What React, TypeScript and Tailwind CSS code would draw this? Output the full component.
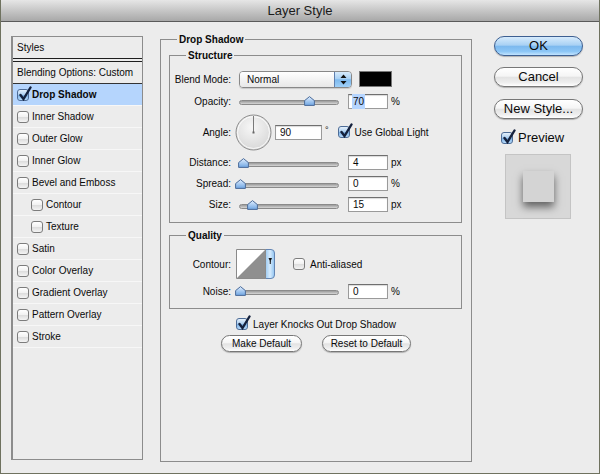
import React from "react";

const styleItems = [
  { label: "Inner Shadow" },
  { label: "Outer Glow" },
  { label: "Inner Glow" },
  { label: "Bevel and Emboss" },
  { label: "Contour", indent: true },
  { label: "Texture", indent: true },
  { label: "Satin" },
  { label: "Color Overlay" },
  { label: "Gradient Overlay" },
  { label: "Pattern Overlay" },
  { label: "Stroke" },
];

function Check({ checked = false }: { checked?: boolean }) {
  return (
    <span
      className={
        "relative inline-block w-[12px] h-[12px] shrink-0 rounded-[3px] border " +
        (checked
          ? "border-[#4d6c97] bg-[linear-gradient(to_bottom,#e4f0fb_0%,#a9cdf0_50%,#7fb3e6_55%,#b5d9fa_100%)]"
          : "border-[#7c7c7c] bg-[linear-gradient(to_bottom,#ffffff_0%,#f1f1f1_50%,#dedede_55%,#f4f4f4_100%)]")
      }
    >
      {checked && (
        <svg className="absolute -top-[4px] left-[1px]" width="13" height="15" viewBox="0 0 13 15">
          <path d="M1.5 9 L4.5 13 L11.5 1.5" stroke="#14213d" strokeWidth="2.4" fill="none" strokeLinecap="round" />
        </svg>
      )}
    </span>
  );
}

function Slider({ pos, id }: { pos: number; id: string }) {
  return (
    <div className="relative w-[100px] h-[10px] shrink-0">
      <div className="absolute left-0 right-0 top-[4px] h-[5px] rounded-full border border-[#8a8a8a] bg-gradient-to-b from-[#9a9a9a] to-[#d6d6d6]" />
      {/* thumb sits on the track */}
      <svg className="absolute top-0" style={{ left: pos - 5.5 }} width="11" height="10" viewBox="0 0 11 10">
        <defs>
          <linearGradient id={id} x1="0" y1="0" x2="0" y2="1">
            <stop offset="0" stopColor="#e2efff" />
            <stop offset="1" stopColor="#6ea5e2" />
          </linearGradient>
        </defs>
        <path d="M5.5 0.6 L10.4 4.6 V9.4 H0.6 V4.6 Z" fill={`url(#${id})`} stroke="#4b6b99" strokeWidth="1" />
      </svg>
    </div>
  );
}

function Field({ value, wide = false, selected = false }: { value: string; wide?: boolean; selected?: boolean }) {
  return (
    <div
      className={
        (wide ? "w-[47px] " : "w-[40px] ") +
        "h-[15px] shrink-0 bg-white border border-[#9a9a9a] border-t-[#6f6f6f] shadow-[inset_0_1px_1px_rgba(0,0,0,0.15)] pl-[3px] flex items-center text-[10px]"
      }
    >
      <span className={selected ? "bg-[#b5d5ff] px-[1px]" : "px-[1px]"}>{value}</span>
    </div>
  );
}

function Label({ children }: { children: React.ReactNode }) {
  return <div className="w-[61px] shrink-0 text-right">{children}</div>;
}

function SliderRow({ label, pos, value, unit, id, tall = false, selected = false }: { label: string; pos: number; value: string; unit: string; id: string; tall?: boolean; selected?: boolean }) {
  return (
    <div className={(tall ? "h-[22px] " : "h-[21px] ") + "flex items-center"}>
      <Label>{label}</Label>
      <div className="ml-[8px]">
        <Slider pos={pos} id={id} />
      </div>
      <div className="ml-[9px]">
        <Field value={value} selected={selected} />
      </div>
      <span className="ml-[3px]">{unit}</span>
    </div>
  );
}

function AquaButton({ children, primary = false }: { children: React.ReactNode; primary?: boolean }) {
  return (
    <div
      className={
        "h-[20px] w-[89px] rounded-full border flex items-center justify-center text-[13px] shadow-[0_1px_1px_rgba(0,0,0,0.25)] " +
        (primary
          ? "border-[#3d5f91] bg-[linear-gradient(to_bottom,#d7ebfc_0%,#a9d1f4_45%,#7db9ee_52%,#8cc6f6_80%,#c2e4ff_100%)]"
          : "border-[#777] bg-[linear-gradient(to_bottom,#ffffff_0%,#f5f5f5_45%,#e3e3e3_52%,#eeeeee_80%,#ffffff_100%)]")
      }
    >
      {children}
    </div>
  );
}

function MiniButton({ children, w }: { children: React.ReactNode; w: string }) {
  return (
    <div
      className={
        w +
        " h-[17px] rounded-full border border-[#777] flex items-center justify-center text-[10px] shadow-[0_1px_1px_rgba(0,0,0,0.25)] bg-[linear-gradient(to_bottom,#ffffff_0%,#f5f5f5_45%,#e3e3e3_52%,#eeeeee_80%,#ffffff_100%)]"
      }
    >
      {children}
    </div>
  );
}

export default function App() {
  return (
    <div className="w-[600px] h-[474px] bg-[#ececec] border-x border-b border-[#6f725f] font-['Liberation_Sans',Arial,sans-serif] text-[10px] text-[#0a0a0a] flex flex-col overflow-hidden">
      {/* Title bar */}
      <div className="h-[22px] shrink-0 bg-gradient-to-b from-[#e6e6e6] to-[#a8a8a8] border-b border-[#5a5a5a] flex items-center justify-center text-[13px] text-[#1a1a1a]">
        Layer Style
      </div>

      <div className="flex pl-[10px] pt-[11px]">
        {/* Styles list */}
        <div className="mt-[3px] w-[132px] h-[424px] shrink-0 border border-l-2 border-[#8c8c8c]">
          <div className="h-[21px] pl-[4px] flex items-center">Styles</div>
          <div className="h-[4px] border-y border-[#1e1e1e]" />
          <div className="h-[22px] pl-[4px] flex items-center border-b border-[#333]">Blending Options: Custom</div>
          <div className="h-[22px] pl-[4px] flex items-center bg-[#b5d5fd] border-b border-[#f7f7f7] font-bold">
            <Check checked />
            <span className="ml-[3px]">Drop Shadow</span>
          </div>
          {styleItems.map((s) => (
            <div
              key={s.label}
              className={"h-[22px] flex items-center border-b border-[#f7f7f7] " + (s.indent ? "pl-[18px]" : "pl-[4px]")}
            >
              <Check />
              <span className="ml-[3px]">{s.label}</span>
            </div>
          ))}
        </div>

        {/* Drop Shadow panel */}
        <fieldset className="ml-[17px] w-[312px] h-[429px] shrink-0 border border-[#8c8c8c]">
          <legend className="ml-[16px] px-[2px] font-bold text-[10px] leading-[13px]">Drop Shadow</legend>

          <fieldset className="mt-[3px] ml-[8px] w-[293px] border border-[#8c8c8c] pb-[7px]">
            <legend className="ml-[16px] px-[2px] font-bold text-[10px] leading-[13px]">Structure</legend>

            <div className="mt-[6px] h-[22px] flex items-center">
              <Label>Blend Mode:</Label>
              <div className="ml-[8px] flex w-[113px] h-[17px] rounded-[4px] border border-[#888] overflow-hidden shadow-[0_1px_1px_rgba(0,0,0,0.15)]">
                <div className="flex-1 pl-[7px] flex items-center bg-gradient-to-b from-white to-[#e8e8e8]">Normal</div>
                <div className="w-[17px] border-l border-[#5f7fae] flex items-center justify-center bg-[linear-gradient(to_bottom,#d7ebfc_0%,#a9d1f4_45%,#7db9ee_52%,#9fd0f8_100%)]">
                  <svg width="7" height="11" viewBox="0 0 7 11">
                    <path d="M3.5 0.5 L6.5 4 H0.5 Z M3.5 10.5 L6.5 7 H0.5 Z" fill="#111" />
                  </svg>
                </div>
              </div>
              <div className="ml-[7px] w-[33px] h-[16px] bg-black border border-[#777]" />
            </div>

            <SliderRow label="Opacity:" pos={70} value="70" unit="%" id="g1" tall selected />

            <div className="h-[40px] flex items-center">
              <Label>Angle:</Label>
              <svg className="ml-[4px] shrink-0" width="37" height="37" viewBox="0 0 37 37">
                <defs>
                  <radialGradient id="dial" cx="0.45" cy="0.35" r="0.7">
                    <stop offset="0" stopColor="#f7f7f7" />
                    <stop offset="1" stopColor="#d6d6d6" />
                  </radialGradient>
                </defs>
                <circle cx="18.5" cy="18.5" r="17.5" fill="url(#dial)" stroke="#8d8d8d" />
                <circle cx="18.5" cy="18.5" r="16" fill="none" stroke="#ffffff" strokeOpacity="0.8" />
                <line x1="18.5" y1="18.5" x2="18.5" y2="2" stroke="#7a7a7a" strokeWidth="1" />
                <rect x="17.5" y="17.5" width="2" height="2" fill="#666" />
              </svg>
              <div className="ml-[3px]">
                <Field value="90" wide />
              </div>
              <span className="ml-[3px] self-start mt-[12px] text-[9px]">°</span>
              <div className="ml-[9px] flex items-center">
                <Check checked />
                <span className="ml-[5px]">Use Global Light</span>
              </div>
            </div>

            <SliderRow label="Distance:" pos={4} value="4" unit="px" id="g2" />
            <SliderRow label="Spread:" pos={1} value="0" unit="%" id="g3" />
            <SliderRow label="Size:" pos={13} value="15" unit="px" id="g4" />
          </fieldset>

          <fieldset className="mt-[6px] ml-[8px] w-[293px] border border-[#8c8c8c] pb-[6px]">
            <legend className="ml-[16px] px-[2px] font-bold text-[10px] leading-[13px]">Quality</legend>

            <div className="mt-[6px] h-[32px] flex items-center">
              <Label>Contour:</Label>
              <svg className="ml-[5px] shrink-0" width="39" height="30" viewBox="0 0 39 30">
                <defs>
                  <linearGradient id="cblue" x1="0" y1="0" x2="1" y2="0">
                    <stop offset="0" stopColor="#9ccaf2" />
                    <stop offset="0.5" stopColor="#d6ebfd" />
                    <stop offset="1" stopColor="#8fc3f0" />
                  </linearGradient>
                </defs>
                <rect x="0.5" y="0.5" width="29" height="29" fill="#fff" />
                <path d="M0.5 29.5 L29.5 0.5 V29.5 Z" fill="#8f8f8f" />
                <path d="M29.5 0.5 H35 Q38.5 0.5 38.5 4 V26 Q38.5 29.5 35 29.5 H29.5 Z" fill="url(#cblue)" stroke="#6485b3" />
                <path d="M0.5 0.5 H29.5 V29.5 H0.5 Z" fill="none" stroke="#8a8a8a" />
                <path d="M32.5 9 H36 L34.25 13 Z" fill="#111" />
                <rect x="33.75" y="12" width="1" height="3" fill="#111" />
              </svg>
              <div className="ml-[18px] flex items-center">
                <Check />
                <span className="ml-[5px]">Anti-aliased</span>
              </div>
            </div>

            <SliderRow label="Noise:" pos={1} value="0" unit="%" id="g5" tall />
          </fieldset>

          <div className="mt-[8px] h-[14px] flex items-center justify-center">
            <Check checked />
            <span className="ml-[5px]">Layer Knocks Out Drop Shadow</span>
          </div>
          <div className="mt-[4px] flex justify-center gap-[20px]">
            <MiniButton w="w-[81px]">Make Default</MiniButton>
            <MiniButton w="w-[89px]">Reset to Default</MiniButton>
          </div>
        </fieldset>

        {/* Buttons column */}
        <div className="ml-[22px] mt-[3px] w-[89px] flex flex-col">
          <AquaButton primary>OK</AquaButton>
          <div className="mt-[11px]">
            <AquaButton>Cancel</AquaButton>
          </div>
          <div className="mt-[12px]">
            <AquaButton>New Style...</AquaButton>
          </div>
          <div className="mt-[12px] h-[14px] ml-[7px] flex items-center text-[13px]">
            <Check checked />
            <span className="ml-[5px]">Preview</span>
          </div>
          <div className="mt-[9px] ml-[11px] w-[66px] h-[65px] bg-[#d8d8d8] border border-[#c4c4c4] flex items-center justify-center">
            <div className="w-[31px] h-[31px] bg-[#d4d4d4] shadow-[0_5px_8px_rgba(0,0,0,0.55)]" />
          </div>
        </div>
      </div>
    </div>
  );
}
